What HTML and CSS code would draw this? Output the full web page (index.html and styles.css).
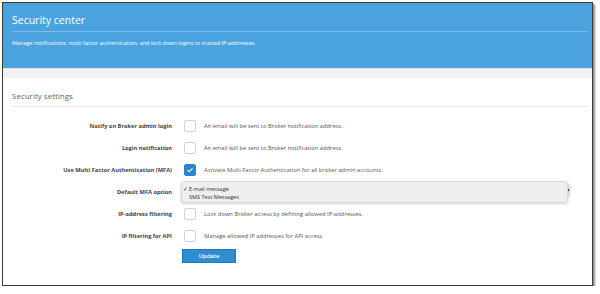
FILE: index.html
```html
<!DOCTYPE html>
<html lang="en">
  <head>
    <meta charset="UTF-8" />
    <title>Security center</title>
    <link rel="stylesheet" href="styles.css">
  </head>
  <body>
    <div class="frame">
      <header class="hero">
        <h1>Security center</h1>
        <p class="hero-sub">Manage notifications, multi factor authentication, and lock down logins to trusted IP-addresses.</p>
      </header>

      <div class="strip"></div>

      <section class="panel">
        <h2>Security settings</h2>

        <form class="settings">
          <label class="label">Notify on Broker admin login</label>
          <span class="check"></span>
          <span class="desc">An email will be sent to Broker notification address.</span>

          <label class="label">Login notification</label>
          <span class="check"></span>
          <span class="desc">An email will be sent to Broker notification address.</span>

          <label class="label">Use Multi Factor Authentication (MFA)</label>
          <span class="check checked">
            <svg viewBox="0 0 12 12" width="12" height="12"><path d="M3.8 6.3 L5.3 7.6 L8.2 4.6" fill="none" stroke="#fff" stroke-width="1.1" stroke-linecap="round" stroke-linejoin="round"/></svg>
          </span>
          <span class="desc">Activate Multi Factor Authentication for all broker admin accounts.</span>

          <label class="label">Default MFA option</label>
          <div class="select-wrap">
            <div class="select-menu">
              <div class="option"><span class="tick">✓</span>E-mail message</div>
              <div class="option"><span class="tick"></span>SMS Text Messages</div>
            </div>
            <span class="select-arrow"></span>
          </div>

          <label class="label">IP-address filtering</label>
          <span class="check"></span>
          <span class="desc">Lock down Broker access by defining allowed IP-addresses.</span>

          <label class="label">IP filtering for API</label>
          <span class="check"></span>
          <span class="desc">Manage allowed IP addresses for API access</span>

          <span></span>
          <button type="button" class="btn">Update</button>
        </form>
      </section>
    </div>
  </body>
</html>
```

FILE: styles.css
```css
* {
  box-sizing: border-box;
  margin: 0;
  padding: 0;
}

body {
  font-family: 'Open Sans', 'Liberation Sans', sans-serif;
  background: #fff;
  padding: 2px 0 0 2px;
}

.frame {
  width: 591px;
  height: 284px;
  border: 1px solid #3a3a3a;
  box-shadow: 2px 2px 2px rgba(0, 0, 0, 0.45);
  background: #fff;
  overflow: hidden;
}

.hero {
  height: 65px;
  background: #4aa3df;
  color: #fff;
  padding: 9px 4px 0 9px;
}

.hero h1 {
  font-size: 10.5px;
  font-weight: 400;
  line-height: 16px;
  padding-bottom: 3px;
  border-bottom: 1px solid rgba(255, 255, 255, 0.28);
}

.hero-sub {
  font-size: 5.5px;
  line-height: 10px;
  margin-top: 6px;
}

.strip {
  height: 10px;
  background: #f0f1f2;
  border-top: 1px solid #dfe3e6;
}

.panel {
  padding: 11px 4px 0 9px;
}

.panel h2 {
  font-size: 8px;
  font-weight: 400;
  color: #666;
  line-height: 14px;
  padding-bottom: 3px;
  border-bottom: 1px solid #e8e8e8;
}

.settings {
  display: grid;
  grid-template-columns: 160px 12px 1fr;
  grid-auto-rows: 22px;
  column-gap: 8px;
  align-items: center;
  margin-top: 8px;
  font-size: 5.8px;
}

.label {
  text-align: right;
  font-weight: 700;
  font-size: 5.7px;
  color: #444;
}

.check {
  display: block;
  width: 12px;
  height: 12px;
  border: 1px solid #d4d4d4;
  border-radius: 2px;
  background: #fff;
  margin-left: 4px;
}

.check.checked {
  background: #2a86cc;
  border-color: #2a86cc;
}

.check svg {
  display: block;
  margin: -1px;
}

.desc {
  color: #555;
  margin-left: 4px;
}

.select-wrap {
  grid-column: 2 / 4;
  position: relative;
  height: 22px;
  margin-left: 1px;
}

.select-menu {
  position: relative;
  z-index: 1;
  width: 387px;
  height: 22px;
  background: #efefef;
  border: 1px solid #dadada;
  border-radius: 3px;
  box-shadow: 0 1px 3px rgba(0, 0, 0, 0.18);
  padding-top: 3px;
  color: #333;
  font-size: 5.5px;
  line-height: 8px;
}

.option {
  display: flex;
}

.tick {
  width: 7px;
  padding-left: 1px;
}

.select-arrow {
  position: absolute;
  left: 384px;
  top: 3px;
  width: 6px;
  height: 13px;
  background: #e9e9e9;
  border-radius: 0 2px 2px 0;
}

.select-arrow::after {
  content: "";
  position: absolute;
  right: 1px;
  top: 5px;
  border-left: 2px solid transparent;
  border-right: 2px solid transparent;
  border-top: 3px solid #555;
}

.btn {
  grid-column: 2 / 4;
  justify-self: start;
  align-self: start;
  margin-top: 2px;
  margin-left: 2px;
  width: 54px;
  height: 14px;
  border: 1px solid #2478b6;
  background: #2f8ed2;
  color: #fff;
  font-family: inherit;
  font-size: 5.8px;
  font-weight: 600;
}
```
